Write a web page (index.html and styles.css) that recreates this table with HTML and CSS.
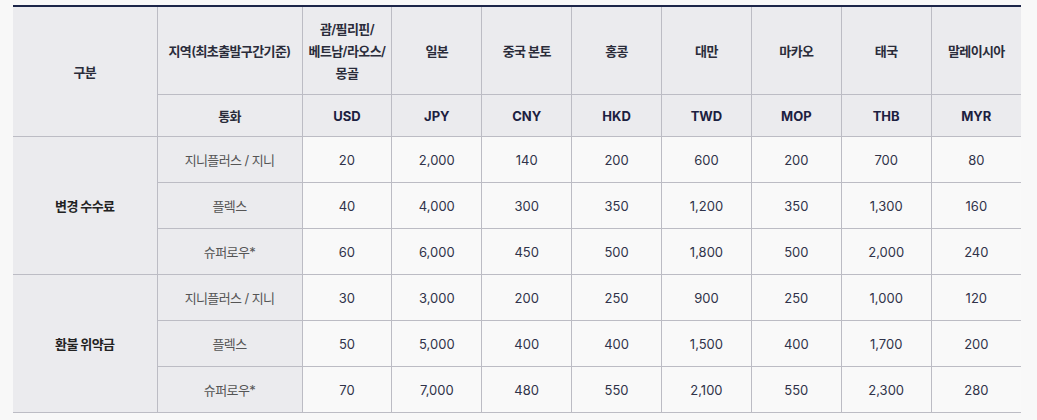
FILE: index.html
```html
<!DOCTYPE html>
<html lang="ko">
<head>
<meta charset="utf-8">
<title>수수료 안내</title>
<link rel="stylesheet" href="styles.css">
</head>
<body>
<div class="wrap">
<table class="fee">
  <colgroup>
    <col class="c-wide"><col class="c-wide2">
    <col class="c-n"><col class="c-n"><col class="c-n"><col class="c-n">
    <col class="c-n"><col class="c-n"><col class="c-n"><col class="c-n">
  </colgroup>
  <thead>
    <tr class="h1">
      <th rowspan="2">구분</th>
      <th>지역(최초출발구간기준)</th>
      <th>괌/필리핀/<br>베트남/라오스/<br>몽골</th>
      <th>일본</th>
      <th>중국 본토</th>
      <th>홍콩</th>
      <th>대만</th>
      <th>마카오</th>
      <th>태국</th>
      <th>말레이시아</th>
    </tr>
    <tr class="h2">
      <th>통화</th>
      <th class="cur">USD</th>
      <th class="cur">JPY</th>
      <th class="cur">CNY</th>
      <th class="cur">HKD</th>
      <th class="cur">TWD</th>
      <th class="cur">MOP</th>
      <th class="cur">THB</th>
      <th class="cur">MYR</th>
    </tr>
  </thead>
  <tbody>
    <tr>
      <th rowspan="3" class="grp">변경 수수료</th>
      <td class="lab">지니플러스 / 지니</td>
      <td>20</td><td>2,000</td><td>140</td><td>200</td><td>600</td><td>200</td><td>700</td><td>80</td>
    </tr>
    <tr>
      <td class="lab">플렉스</td>
      <td>40</td><td>4,000</td><td>300</td><td>350</td><td>1,200</td><td>350</td><td>1,300</td><td>160</td>
    </tr>
    <tr>
      <td class="lab">슈퍼로우*</td>
      <td>60</td><td>6,000</td><td>450</td><td>500</td><td>1,800</td><td>500</td><td>2,000</td><td>240</td>
    </tr>
    <tr>
      <th rowspan="3" class="grp">환불 위약금</th>
      <td class="lab">지니플러스 / 지니</td>
      <td>30</td><td>3,000</td><td>200</td><td>250</td><td>900</td><td>250</td><td>1,000</td><td>120</td>
    </tr>
    <tr>
      <td class="lab">플렉스</td>
      <td>50</td><td>5,000</td><td>400</td><td>400</td><td>1,500</td><td>400</td><td>1,700</td><td>200</td>
    </tr>
    <tr>
      <td class="lab">슈퍼로우*</td>
      <td>70</td><td>7,000</td><td>480</td><td>550</td><td>2,100</td><td>550</td><td>2,300</td><td>280</td>
    </tr>
  </tbody>
</table>
</div>
</body>
</html>
```
FILE: styles.css
```css
html, body {
  margin: 0;
  padding: 0;
  background: #f8f8f8;
}
body {
  font-family: Inter, "Noto Sans CJK KR", sans-serif;
  font-size: 13px;
  color: #333;
}
.wrap {
  padding: 5px 16px 0 13px;
}
.fee {
  width: 1008px;
  border-collapse: collapse;
  table-layout: fixed;
  border-top: 2px solid #1c2548;
  border-bottom: 1px solid #bcbcc4;
}
.c-wide { width: 144px; }
.c-wide2 { width: 145px; }
.c-n { width: 89.875px; }
.fee th, .fee td {
  border: 1px solid #bcbcc4;
  text-align: center;
  vertical-align: middle;
  padding: 0;
  letter-spacing: -0.6px;
}
.fee tr > :first-child { border-left: 0; }
.fee tr > :last-child { border-right: 0; }
.fee thead th {
  background: #ebebee;
  font-weight: 600;
  color: #2a2c3a;
  line-height: 22px;
}
.fee thead tr.h1 th { height: 87px; }
.fee thead tr.h2 th { height: 41px; }
.fee thead th.cur {
  font-weight: 700;
  color: #1c2040;
  letter-spacing: 0;
}
.fee tbody tr { height: 46px; }
.fee tbody th.grp {
  background: #ebebee;
  font-weight: 700;
  color: #222;
  border-left: 0;
}
.fee tbody td {
  background: #f9f9f9;
  color: #30334a;
  letter-spacing: 0;
}
.fee tbody td.lab {
  background: #ebebee;
  color: #555;
  letter-spacing: -0.6px;
}
```
